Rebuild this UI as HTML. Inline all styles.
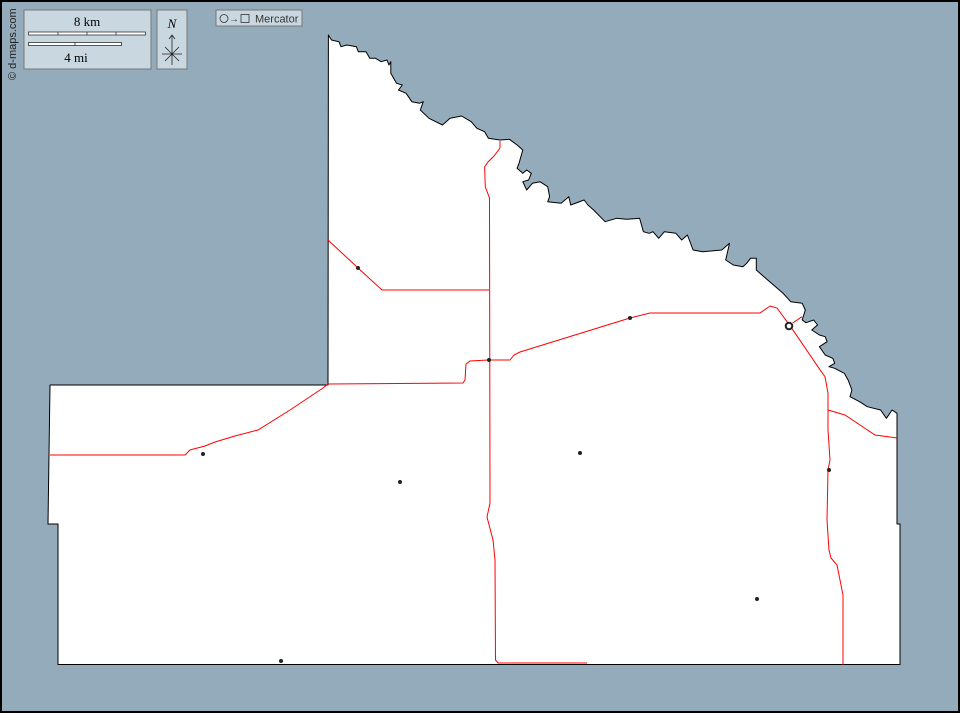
<!DOCTYPE html>
<html><head><meta charset="utf-8"><style>
html,body{margin:0;padding:0;background:#94abbb;}
svg{display:block}
</style></head><body>
<svg width="960" height="713" viewBox="0 0 960 713" xmlns="http://www.w3.org/2000/svg">
<rect x="0" y="0" width="960" height="713" fill="#94abbb"/>
<path fill="#fff" stroke="#000" stroke-width="1" stroke-linejoin="round" d="M328.4,35 L331.5,40 339,41.7 341,46.7 346.8,45 356.4,46.7 358.3,51.7 366,51.7 369.8,58.3 375.5,58.3 381.2,61.7 387,60 388.9,65 390.8,61.7 390.8,73.3 396.5,83.3 402.3,85 398.5,90 406.1,93.3 411.8,101.7 419.5,103.3 423.3,101.7 420.3,110 429,118.3 442.5,125 450.1,118.3 461.6,116 471.2,121.7 476.9,128.3 484.6,131.7 488.4,138.3 499.9,140 509.4,139.3 517.1,145 522.8,150 519,163.3 517.1,168.3 522.8,173.3 526.7,170 531.3,173.3 528.6,180 522.8,181.7 526.7,190 532.4,183.3 540,181.7 547.7,186.7 549.6,196.7 547.7,201.7 561.1,203.3 568.8,196.7 570.7,205 584.1,200 587.9,205 593.6,210 605.1,221.7 616.6,218.3 626.2,219.3 639.6,218.3 643.4,231.7 649.1,233.3 653,231.7 658.7,238.3 664.4,231.7 675.9,233.3 681.7,240 687.4,235 693.1,250 702.7,251.7 721.8,250 729.5,243.3 725.7,260 733.3,265 742.9,266.7 746.7,263.3 750.5,258.3 756.3,258.3 756.3,270 763.9,276.7 773.5,285 783.1,293.3 790.7,301.7 802.2,303.3 805.3,310 802.2,320 806,322.7 813.7,320 817.5,325 813.7,328.3 811.8,330 819.4,335 825.2,336.7 827.1,341.7 819.4,346.7 825.2,355 832.8,358.3 834.7,363.3 829,366.7 834.7,368.3 844.3,373.3 848.1,380 851.9,390 850,396.7 859.6,401.7 867.3,406.7 880.6,410 886.4,418.3 892.1,410 897,413.3 L897,524 900,524 900,664.5 58,664.5 58,524 48,524 50,385 328,385 Z"/>
<g fill="none" stroke="#ff0000" stroke-width="1">
<path d="M500,141 L500,148 494,156 488,162 484.6,167 485.3,187 489.5,198 490,503 487,517 493,540 495,560 495.5,660 498,663 587,663"/>
<path d="M328,240 L358,268 382,290 489,290"/>
<path d="M50,455 L185,455 190,450 205,446 215,442 235,436 258,430 290,410 323,388 328,384 463,383 465,380 466,364 470,361 488,360 510,360 514,355 520,352 630,318 650,313 760,313 770,306 777,308 790.7,326.7 821.3,371.7 825,376.7 828,393 828,430 830,460 828,470 827,520 829,550 831,558 837,565 843,595 843,665"/>
<path d="M792.6,323 L802,316.7"/>
<path d="M828,410 L845,415 860,425 875,435 897,438"/>
</g>
<g fill="#222">
<circle cx="358" cy="268" r="2"/><circle cx="489" cy="360" r="2"/><circle cx="630" cy="318" r="2"/>
<circle cx="203" cy="454" r="2"/><circle cx="400" cy="482" r="2"/><circle cx="580" cy="453" r="2"/>
<circle cx="829" cy="470" r="2"/><circle cx="757" cy="599" r="2"/><circle cx="281" cy="661" r="2"/>
</g>
<circle cx="789" cy="326" r="3.3" fill="#fff" stroke="#222" stroke-width="2"/>
<!-- legend -->
<rect x="24" y="10" width="127" height="59" fill="#c9d8e0" stroke="#777" stroke-width="1"/>
<text x="87" y="26" font-family="Liberation Serif, serif" font-size="13" text-anchor="middle" fill="#000">8 km</text>
<rect x="28.5" y="32" width="117" height="3" fill="#fff" stroke="#333" stroke-width="0.8"/>
<path d="M58,32v3M87,32v3M116,32v3" stroke="#333" stroke-width="0.8"/>
<rect x="28.5" y="42.5" width="93" height="3" fill="#fff" stroke="#333" stroke-width="0.8"/>
<path d="M75,42v4" stroke="#333" stroke-width="0.8"/>
<text x="76" y="62" font-family="Liberation Serif, serif" font-size="13" text-anchor="middle" fill="#000">4 mi</text>
<rect x="157" y="10" width="30" height="59" fill="#c9d8e0" stroke="#777" stroke-width="1"/>
<text x="172" y="28" font-family="Liberation Serif, serif" font-size="13" font-style="italic" text-anchor="middle" fill="#000">N</text>
<path d="M172,35v30M162,54h20M165,47l14,14M179,47l-14,14M169,39l3,-4 3,4" stroke="#222" stroke-width="0.8" fill="none"/>
<rect x="216" y="10" width="86" height="16" fill="#c9d8e0" stroke="#777" stroke-width="1"/>
<circle cx="224" cy="18.5" r="4" fill="none" stroke="#333" stroke-width="0.8"/>
<text x="229" y="22" font-family="Liberation Sans, sans-serif" font-size="10" fill="#333">→</text>
<rect x="241" y="14.5" width="8" height="8" fill="none" stroke="#333" stroke-width="0.8"/>
<text x="255" y="22.5" font-family="Liberation Sans, sans-serif" font-size="11" fill="#333">Mercator</text>
<text transform="translate(16,80) rotate(-90)" font-family="Liberation Sans, sans-serif" font-size="11" fill="#222">© d-maps.com</text>
<rect x="1" y="1" width="958" height="711" fill="none" stroke="#000" stroke-width="2"/>
</svg>
</body></html>
